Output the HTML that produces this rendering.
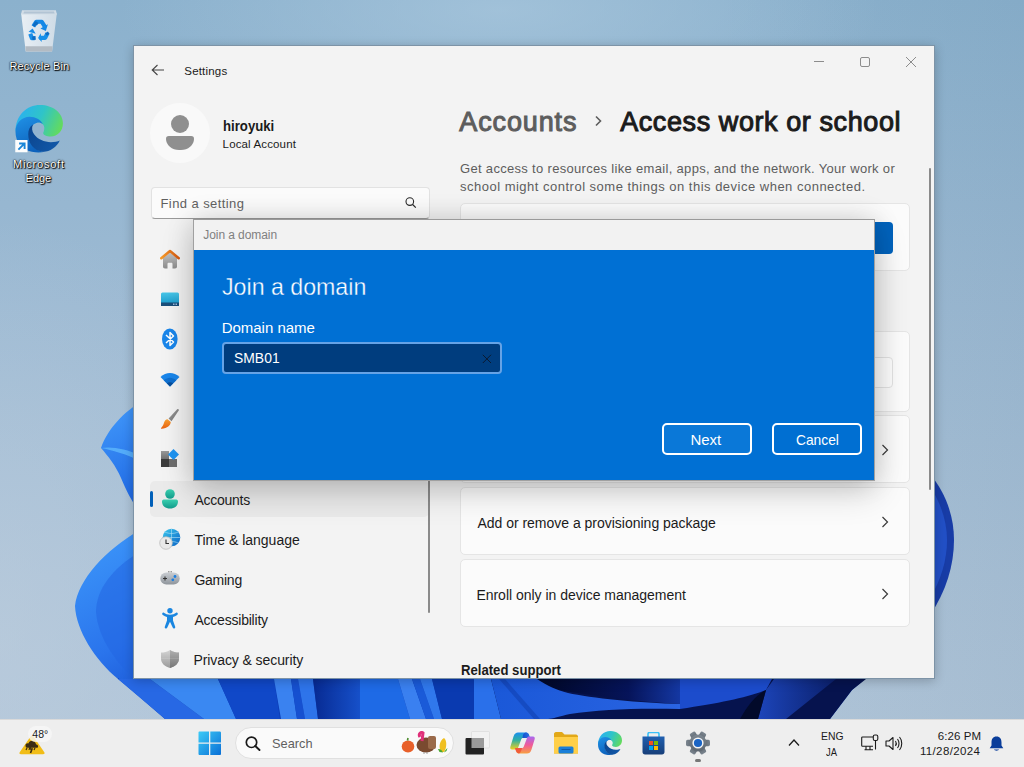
<!DOCTYPE html>
<html><head><meta charset="utf-8">
<style>
*{margin:0;padding:0;box-sizing:border-box}
html,body{width:1024px;height:767px;overflow:hidden}
body{font-family:"Liberation Sans",sans-serif;position:relative;background:radial-gradient(ellipse 300px 420px at 0px 640px,rgba(190,206,222,.55),rgba(190,206,222,0) 100%),radial-gradient(ellipse 380px 120px at 500px 10px,rgba(170,200,222,.7),rgba(170,200,222,0) 100%),linear-gradient(90deg,rgba(0,0,0,0) 70%,rgba(60,100,130,.08) 100%),linear-gradient(180deg,#8bb1cd 0%,#9dbad3 40%,#abc2d7 75%,#b2c6d9 100%)}
.abs{position:absolute}
.t{position:absolute;white-space:nowrap;line-height:normal}
#win{position:absolute;left:133px;top:45px;width:802px;height:634px;background:#f3f3f3;border:1px solid #7d93a6;box-shadow:0 2px 10px rgba(0,0,0,.22)}
.card{position:absolute;left:460px;width:450px;background:#fbfbfb;border:1px solid #e5e5e5;border-radius:5px}
.chev{position:absolute;width:8px;height:12px}
#dlg{position:absolute;left:193px;top:219px;width:682px;height:262px;background:#0070d4;box-shadow:0 0 26px rgba(0,0,0,.14),0 12px 32px rgba(0,0,0,.16);border:1px solid #a0a0a0;border-top-color:#9a9a9a}
#tb{position:absolute;left:0;top:719px;width:1024px;height:48px;background:#eeeeee;border-top:1px solid #dadada}
</style></head>
<body>
<!-- wallpaper bloom -->
<svg class="abs" style="left:0;top:0" width="1024" height="767" viewBox="0 0 1024 767">
  <defs>
    <linearGradient id="bl1" x1="0" y1="0" x2="1" y2="1">
      <stop offset="0" stop-color="#4a9af6"/><stop offset=".5" stop-color="#2f7df0"/><stop offset="1" stop-color="#1f66e2"/>
    </linearGradient>
    <linearGradient id="bl3" x1="0" y1="0" x2="1" y2="0">
      <stop offset="0" stop-color="#3d8ef4"/><stop offset="1" stop-color="#2a76ee"/>
    </linearGradient>
    <linearGradient id="nv" x1="0" y1="0" x2="1" y2="0">
      <stop offset="0" stop-color="#072a92"/><stop offset="1" stop-color="#1a5ad8"/>
    </linearGradient>
    <linearGradient id="dk" x1="0" y1="0" x2="1" y2="0">
      <stop offset="0" stop-color="#0a1e70"/><stop offset="1" stop-color="#020a30"/>
    </linearGradient>
  </defs>
  <!-- left upper petal -->
  <linearGradient id="up1" gradientUnits="userSpaceOnUse" x1="100" y1="420" x2="140" y2="500"><stop offset="0" stop-color="#3e94f8"/><stop offset="1" stop-color="#1f68e4"/></linearGradient>
  <linearGradient id="lp1" gradientUnits="userSpaceOnUse" x1="75" y1="560" x2="150" y2="700"><stop offset="0" stop-color="#3a92f8"/><stop offset=".6" stop-color="#2a74ec"/><stop offset="1" stop-color="#1a56d4"/></linearGradient>
  <path d="M140 403 C126 410 108 428 101 448 C108 456 116 466 121 478 C127 492 132 502 140 512 Z" fill="url(#up1)"/>
  <path d="M101 448 C112 446 126 449 140 455 L140 461 C126 454 112 450 101 448 Z" fill="#5ab4fc" opacity=".85"/>
  <!-- left lower petal -->
  <path d="M140 530 C105 550 78 580 75 606 C76 630 95 660 118 679 L166 719 L190 719 L140 680 Z" fill="url(#lp1)"/>
  <path d="M140 552 C112 568 96 590 96 612 C98 638 116 664 140 684 Z" fill="#2266e2" opacity=".55"/>
  <!-- bottom strip -->
  <path d="M118 679 L865 679 L852 690 L830 719 L165 719 L118 678 Z" fill="#0c3cb4"/>
  <path d="M118 679 L150 679 L204 719 L165 719 Z" fill="#2768e4"/>
  <path d="M150 679 L218 679 L236 719 L204 719 Z" fill="#3a88f2"/>
  <path d="M218 679 L274 679 L280 719 L236 719 Z" fill="#1048c8"/>
  <path d="M274 679 L291 679 L297 719 L281 719 Z" fill="#3a82f0"/>
  <path d="M291 679 L298 679 L305 719 L297 719 Z" fill="#1650d0"/>
  <path d="M298 679 L313 679 L318 719 L305 719 Z" fill="#2e74ea"/>
  <path d="M313 679 L372 679 L372 719 L318 719 Z" fill="url(#nv)"/>
  <path d="M360 679 L398 679 L410 719 L360 719 Z" fill="#1e6ae6"/>
  <path d="M398 679 L412 679 L426 719 L410 719 Z" fill="#3a80f0"/>
  <path d="M412 679 L420 679 L434 719 L426 719 Z" fill="#1a5ad8"/>
  <path d="M420 679 L432 679 L442 719 L434 719 Z" fill="#3078ec"/>
  <path d="M432 679 L474 679 L480 719 L442 719 Z" fill="#0a3ab0"/>
  <linearGradient id="wv" x1="0" y1="0" x2="1" y2="0"><stop offset="0" stop-color="#1a58d8"/><stop offset="1" stop-color="#2a64e2"/></linearGradient>
  <linearGradient id="up" gradientUnits="userSpaceOnUse" x1="540" y1="690" x2="700" y2="679"><stop offset="0" stop-color="#010828"/><stop offset=".55" stop-color="#06145a"/><stop offset="1" stop-color="#1a46c0"/></linearGradient>
  <linearGradient id="rb2" gradientUnits="userSpaceOnUse" x1="760" y1="700" x2="840" y2="700"><stop offset="0" stop-color="#1c44b8"/><stop offset="1" stop-color="#0a1e68"/></linearGradient>
  <path d="M474 679 L866 679 L852 690 L830 719 L474 719 Z" fill="#06134e"/>
  <path d="M474 679 L537 679 L680 679 L680 704 C640 702 600 697 558 690 Z" fill="url(#up)"/>
  <path d="M474 679 L491 679 L501 719 L474 719 Z" fill="#2a70ea"/>
  <path d="M491 679 L537 679 C548 686 556 690 568 693 C590 698 640 703 680 704 L680 709 C640 708 600 709 570 714 C560 716 552 719 548 719 L501 719 Z" fill="url(#wv)"/>
  <path d="M499 679 L505 679 L540 719 L534 719 Z" fill="#1244b8" opacity=".7"/>
  <path d="M680 679 L772 679 L766 690 C745 698 720 703 680 709 Z" fill="#1c4ccc"/>
  <path d="M774 679 L836 679 L786 719 L758 719 L766 690 Z" fill="url(#rb2)"/>
  <path d="M766 690 L758 719 L740 719 C748 705 756 695 766 690 Z" fill="#020a2a"/>
  <!-- right piece -->
  <path d="M930 474 C945 492 954 515 954 540 C954 565 946 592 930 615 Z" fill="#183ca6"/>
  <path d="M930 486 C940 502 947 520 947 540 C947 560 941 580 930 598 Z" fill="#2250c6"/>
</svg>
<!-- recycle bin -->
<svg class="abs" style="left:14px;top:4px" width="50" height="52" viewBox="0 0 738 767">
  <defs><linearGradient id="rb" x1="0" y1="0" x2="1" y2="0"><stop offset="0" stop-color="#e9eff4"/><stop offset=".5" stop-color="#dbe5ee"/><stop offset="1" stop-color="#d0dce6"/></linearGradient></defs>
  <path d="M105 140 L632 140 L562 700 L173 700 Z" fill="url(#rb)"/>
  <path d="M118 92 L618 92 L634 155 L103 155 Z" fill="#d2dde6"/>
  <path d="M150 112 L590 112 L600 140 L138 140 Z" fill="#b2c4d4"/>
  <path d="M168 622 L568 622 L562 702 L173 702 Z" fill="#b3bbc3"/>
  <g stroke-linejoin="round">
    <path d="M285 330 L330 262 L410 262 L455 335" stroke="#1488e6" stroke-width="62" fill="none"/>
    <path d="M500 300 L470 400 L390 360 Z" fill="#1488e6"/>
    <path d="M290 330 L320 275 L350 300" stroke="#0d6cc4" stroke-width="40" fill="none"/>
    <path d="M495 430 L460 500 L375 500" stroke="#1790ea" stroke-width="62" fill="none"/>
    <path d="M395 430 L355 500 L410 560 Z" fill="#1790ea"/>
    <path d="M480 420 L505 455" stroke="#0d6cc4" stroke-width="50" fill="none"/>
    <path d="M305 505 L265 505 L240 440" stroke="#1a8ee8" stroke-width="62" fill="none"/>
    <path d="M215 410 L275 360 L320 440 Z" fill="#1a8ee8"/>
    <path d="M320 500 L270 505" stroke="#0d6cc4" stroke-width="55" fill="none"/>
  </g>
</svg>

<!-- edge desktop icon -->
<svg class="abs" style="left:10px;top:100px" width="60" height="56" viewBox="0 0 822 767"><defs>
    <linearGradient id="eg1" gradientUnits="userSpaceOnUse" x1="100" y1="150" x2="700" y2="420"><stop offset="0" stop-color="#2ab0f2"/><stop offset=".5" stop-color="#2fc4c8"/><stop offset="1" stop-color="#66dc58"/></linearGradient>
    <linearGradient id="eg2" gradientUnits="userSpaceOnUse" x1="100" y1="250" x2="300" y2="700"><stop offset="0" stop-color="#1f8fe4"/><stop offset="1" stop-color="#0d62bc"/></linearGradient>
    <linearGradient id="eg3" gradientUnits="userSpaceOnUse" x1="260" y1="400" x2="650" y2="650"><stop offset="0" stop-color="#0b4690"/><stop offset="1" stop-color="#1258a8"/></linearGradient>
  </defs>
  <path d="M75 420 C80 210 230 70 410 70 C590 70 725 180 725 320 C725 430 650 500 560 500 C500 500 455 478 455 455 C455 440 470 420 470 385 C470 340 430 305 380 305 Z" fill="url(#eg1)"/>
  <path d="M75 430 C75 320 160 230 270 230 C350 230 420 270 450 330 C420 300 370 300 330 330 C270 380 250 450 270 540 C300 650 400 705 480 710 C420 720 360 720 300 710 C160 680 75 570 75 430 Z" fill="url(#eg2)"/>
  <circle cx="392" cy="400" r="72" fill="#92b3cf"/>
  <path d="M250 470 C250 410 270 365 315 335 C295 380 300 430 330 470 C380 540 470 578 560 578 C610 578 655 568 682 555 C640 650 540 712 450 708 C330 700 250 600 250 470 Z" fill="url(#eg3)"/>
  <rect x="72" y="548" width="168" height="168" fill="#fdfdfd"/>
  <path d="M115 680 L200 595 M125 595 L200 595 L200 670" stroke="#1a86d8" stroke-width="26" fill="none"/>
</svg>
<!-- settings window -->
<div id="win"></div>
<svg class="abs" style="left:151px;top:64px" width="14" height="12" viewBox="0 0 14 12"><path d="M6.5 1 L1.2 6 L6.5 11 M1.2 6 L13 6" stroke="#444" stroke-width="1.1" fill="none"/></svg>
<div class="abs" style="left:814px;top:61px;width:10px;height:1px;background:#8c8c8c"></div>
<div class="abs" style="left:860px;top:57px;width:10px;height:10px;border:1px solid #8c8c8c;border-radius:2px"></div>
<svg class="abs" style="left:905px;top:56px" width="12" height="12" viewBox="0 0 12 12"><path d="M1 1 L11 11 M11 1 L1 11" stroke="#8c8c8c" stroke-width="1" fill="none"/></svg>

<!-- avatar -->
<div class="abs" style="left:150px;top:103px;width:60px;height:60px;border-radius:50%;background:#f9f9f9"></div>
<div class="abs" style="left:171px;top:115px;width:18px;height:18px;border-radius:50%;background:#8f8f8f"></div>
<div class="abs" style="left:166px;top:136px;width:28px;height:14px;border-radius:3px 3px 14px 14px / 3px 3px 12px 12px;background:#8f8f8f"></div>

<!-- search -->
<div class="abs" style="left:151px;top:187px;width:279px;height:32px;background:#fbfbfb;border:1px solid #e2e2e2;border-bottom:1px solid #9a9a9a;border-radius:4px"></div>
<svg class="abs" style="left:405px;top:197px" width="12" height="12" viewBox="0 0 12 12"><circle cx="4.8" cy="4.6" r="3.8" stroke="#2a2a2a" stroke-width="1.1" fill="none"/><path d="M7.6 7.5 L10.8 10.6" stroke="#2a2a2a" stroke-width="1.2"/></svg>

<!-- nav selection -->
<div class="abs" style="left:150px;top:481px;width:279px;height:36px;background:#eaeaea;border-radius:5px"></div>
<div class="abs" style="left:150px;top:491px;width:3px;height:16px;background:#005fb8;border-radius:2px"></div>
<!-- nav scrollbar -->
<div class="abs" style="left:428px;top:480px;width:2px;height:133px;background:#8a8a8a;border-radius:1px"></div>

<!-- nav icons -->
<svg class="abs" style="left:160px;top:249px" width="20" height="20" viewBox="0 0 20 20">
  <defs><linearGradient id="hm" x1="0" y1="0" x2="0" y2="1"><stop offset="0" stop-color="#c4c4c4"/><stop offset="1" stop-color="#8c8c8c"/></linearGradient>
  <linearGradient id="rf" x1="0" y1="0" x2="1" y2="0"><stop offset="0" stop-color="#f59a2a"/><stop offset="1" stop-color="#d85a10"/></linearGradient></defs>
  <path d="M3 9 L10 3.5 L17 9 L17 17.5 C17 18.8 16.3 19.5 15 19.5 L12.5 19.5 L12.5 15 C12.5 14.3 12 13.8 11.3 13.8 L8.7 13.8 C8 13.8 7.5 14.3 7.5 15 L7.5 19.5 L5 19.5 C3.7 19.5 3 18.8 3 17.5 Z" fill="url(#hm)"/>
  <path d="M1.3 9.2 L10 2 L18.7 9.2" stroke="url(#rf)" stroke-width="2.6" fill="none" stroke-linecap="round" stroke-linejoin="round"/>
</svg>
<svg class="abs" style="left:160px;top:292px" width="20" height="15" viewBox="0 0 20 15">
  <defs><linearGradient id="sy" x1="0" y1="0" x2="0" y2="1"><stop offset="0" stop-color="#48c6e8"/><stop offset="1" stop-color="#1596c9"/></linearGradient></defs>
  <rect x="1" y="0.5" width="18" height="13.5" rx="1.5" fill="url(#sy)"/>
  <rect x="1" y="10.5" width="18" height="3.5" fill="#1a4f7a"/>
  <rect x="13" y="11.5" width="1.5" height="1.5" fill="#9bd"/><rect x="15.5" y="11.5" width="1.5" height="1.5" fill="#9bd"/>
</svg>
<svg class="abs" style="left:161px;top:328px" width="18" height="22" viewBox="0 0 18 22">
  <ellipse cx="8.8" cy="11" rx="7.8" ry="10.5" fill="#1a86ea"/>
  <path d="M5 7 L12.5 14 L9 17.5 L9 4.5 L12.5 8 L5 15" stroke="#fff" stroke-width="1.5" fill="none" stroke-linejoin="round"/>
</svg>
<svg class="abs" style="left:160px;top:372px" width="20" height="15" viewBox="0 0 20 15">
  <path d="M0.5 5 C6 -0.5 14 -0.5 19.5 5 L10 14.5 Z" fill="#1a86ea"/>
  <path d="M3.7 8.2 C7.5 4.8 12.5 4.8 16.3 8.2 L10 14.5 Z" fill="#0f6fcf"/>
  <path d="M6.8 11.3 C8.6 9.8 11.4 9.8 13.2 11.3 L10 14.5 Z" fill="#0a4f9a"/>
</svg>
<svg class="abs" style="left:160px;top:408px" width="20" height="22" viewBox="0 0 20 22">
  <defs><linearGradient id="br" x1="0" y1="0" x2="1" y2="1"><stop offset="0" stop-color="#a8a8a8"/><stop offset="1" stop-color="#6a6a6a"/></linearGradient>
  <linearGradient id="bt" x1="0" y1="0" x2="0" y2="1"><stop offset="0" stop-color="#f8a030"/><stop offset="1" stop-color="#e86010"/></linearGradient></defs>
  <path d="M17.2 1.2 C18.2 0.5 19.3 1.5 18.7 2.6 L11.5 13.2 L8.6 10.6 Z" fill="url(#br)"/>
  <path d="M7.6 11.3 L10.8 14.1 C10.5 17.5 7.5 20.5 1.5 20.8 C1 20.8 0.8 20.4 1.1 20 C3 18.2 3.5 16.5 4 14.8 C4.5 12.8 5.8 11.5 7.6 11.3 Z" fill="url(#bt)"/>
</svg>
<svg class="abs" style="left:161px;top:448px" width="19" height="20" viewBox="0 0 19 20">
  <defs><linearGradient id="ap" x1="0" y1="0" x2="0" y2="1"><stop offset="0" stop-color="#9a9a9a"/><stop offset="1" stop-color="#707070"/></linearGradient></defs>
  <rect x="0" y="3" width="8" height="8" fill="url(#ap)"/>
  <rect x="0" y="11" width="8" height="8" fill="#3c3c3c"/>
  <rect x="8" y="11" width="8" height="8" fill="#6e6e6e"/>
  <path d="M12.5 1 L18 6.5 L12.5 12 L7 6.5 Z" fill="#1e94f2"/>
</svg>
<svg class="abs" style="left:161px;top:489px" width="18" height="20" viewBox="0 0 18 20">
  <defs><linearGradient id="ac" x1="0" y1="0" x2="0" y2="1"><stop offset="0" stop-color="#3ad0b0"/><stop offset="1" stop-color="#119a8a"/></linearGradient></defs>
  <circle cx="9" cy="5" r="4.8" fill="url(#ac)"/>
  <path d="M1 12.5 C1 11 2 10.5 3.5 10.5 L14.5 10.5 C16 10.5 17 11 17 12.5 C17 17 13.5 19.5 9 19.5 C4.5 19.5 1 17 1 12.5 Z" fill="url(#ac)"/>
</svg>
<svg class="abs" style="left:159px;top:528px" width="22" height="22" viewBox="0 0 22 22">
  <defs><linearGradient id="gl" x1="0" y1="0" x2="1" y2="1"><stop offset="0" stop-color="#3ac8ee"/><stop offset="1" stop-color="#0b62c4"/></linearGradient></defs>
  <circle cx="12.5" cy="9.5" r="8.8" fill="url(#gl)"/>
  <path d="M12.5 0.7 L12.5 18.3 M3.7 9.5 L21.3 9.5 M6 4 C10 6 15 6 19 4 M6 15 C10 13 15 13 19 15" stroke="#bfe8f8" stroke-width=".7" fill="none" opacity=".8"/>
  <circle cx="7" cy="15" r="6.3" fill="#e9e9e9" stroke="#b8b8b8" stroke-width=".7"/>
  <path d="M7 11.5 L7 15.5 L10 15.5" stroke="#333" stroke-width="1.1" fill="none"/>
</svg>
<svg class="abs" style="left:160px;top:571px" width="20" height="14" viewBox="0 0 20 14">
  <defs><linearGradient id="gm" x1="0" y1="0" x2="0" y2="1"><stop offset="0" stop-color="#c9cdd2"/><stop offset="1" stop-color="#8f959c"/></linearGradient></defs>
  <rect x="0.3" y="1.5" width="19.4" height="12" rx="6" fill="url(#gm)"/>
  <path d="M3 7.5 L7 7.5 M5 5.5 L5 9.5" stroke="#333" stroke-width="1.1"/>
  <circle cx="15" cy="5.5" r="1.4" fill="#1c7fe0"/><circle cx="12.8" cy="8.8" r="1.4" fill="#1c7fe0"/>
  <circle cx="8.5" cy="0.8" r=".5" fill="#555"/><circle cx="10" cy="0.8" r=".5" fill="#555"/><circle cx="11.5" cy="0.8" r=".5" fill="#555"/>
</svg>
<svg class="abs" style="left:161px;top:608px" width="18" height="21" viewBox="0 0 18 21">
  <circle cx="9" cy="2.8" r="2.7" fill="#1a86e0"/>
  <path d="M1.3 5.3 C1.6 4.6 2.3 4.4 2.9 4.8 C4.5 6 6.5 6.8 9 6.8 C11.5 6.8 13.5 6 15.1 4.8 C15.7 4.4 16.4 4.6 16.7 5.3 C17 5.9 16.8 6.5 16.2 6.9 C14.8 7.9 13.3 8.6 12 8.9 L12 12.5 L14.2 18.8 C14.5 19.6 14.1 20.3 13.3 20.5 C12.6 20.7 11.9 20.3 11.7 19.6 L9 13.8 L6.3 19.6 C6.1 20.3 5.4 20.7 4.7 20.5 C3.9 20.3 3.5 19.6 3.8 18.8 L6 12.5 L6 8.9 C4.7 8.6 3.2 7.9 1.8 6.9 C1.2 6.5 1 5.9 1.3 5.3 Z" fill="#1a86e0"/>
</svg>
<svg class="abs" style="left:160px;top:649px" width="20" height="20" viewBox="0 0 20 20">
  <defs><linearGradient id="sh" x1="0" y1="0" x2="0" y2="1"><stop offset="0" stop-color="#d4d4d4"/><stop offset="1" stop-color="#9a9a9a"/></linearGradient>
  <linearGradient id="sh2" x1="0" y1="0" x2="0" y2="1"><stop offset="0" stop-color="#b0b0b0"/><stop offset="1" stop-color="#767676"/></linearGradient></defs>
  <path d="M10 1 C13 3 16 3.5 19 3.5 L19 9.5 C19 14 15.5 17.5 10 19 C4.5 17.5 1 14 1 9.5 L1 3.5 C4 3.5 7 3 10 1 Z" fill="url(#sh)"/>
  <path d="M10 1 L10 19 C15.5 17.5 19 14 19 9.5 L19 3.5 C16 3.5 13 3 10 1 Z" fill="url(#sh2)"/>
  <path d="M1 9.5 L19 9.5" stroke="#fff" stroke-width=".4" opacity=".3"/>
</svg>

<svg class="abs" style="left:594px;top:115px" width="9" height="12" viewBox="0 0 9 12"><path d="M2 1.5 L6.5 6 L2 10.5" stroke="#5d5d5d" stroke-width="1.6" fill="none"/></svg>
<!-- content cards -->
<div class="card" style="top:203px;height:68px"></div>
<div class="abs" style="left:840px;top:222px;width:53px;height:32px;background:#0063bd;border-radius:4px"></div>
<div class="card" style="top:331px;height:81px"></div>
<div class="abs" style="left:800px;top:357px;width:93px;height:31px;background:#fdfdfd;border:1px solid #e3e3e3;border-radius:4px"></div>
<div class="card" style="top:415px;height:68px"></div>
<div class="card" style="top:487px;height:68px"></div>
<div class="card" style="top:559px;height:68px"></div>
<svg class="chev" style="left:881px;top:444px" viewBox="0 0 8 12"><path d="M1.5 1 L6.5 6 L1.5 11" stroke="#3a3a3a" stroke-width="1.2" fill="none"/></svg>
<svg class="chev" style="left:881px;top:516px" viewBox="0 0 8 12"><path d="M1.5 1 L6.5 6 L1.5 11" stroke="#3a3a3a" stroke-width="1.2" fill="none"/></svg>
<svg class="chev" style="left:881px;top:588px" viewBox="0 0 8 12"><path d="M1.5 1 L6.5 6 L1.5 11" stroke="#3a3a3a" stroke-width="1.2" fill="none"/></svg>
<!-- content scrollbar -->
<div class="abs" style="left:929px;top:168px;width:2px;height:322px;background:#8a8a8a;border-radius:1px"></div>

<!-- dialog -->
<div id="dlg">
  <div class="abs" style="left:0;top:0;width:680px;height:30px;background:#f2f2f2"></div>
</div>
<div class="abs" style="left:222px;top:342px;width:280px;height:32px;background:#003d7e;border:2px solid #66a3e6;border-radius:4px"></div>
<svg class="abs" style="left:482px;top:354px" width="10" height="10" viewBox="0 0 10 10"><path d="M0.8 0.8 L9 9 M9 0.8 L0.8 9" stroke="#0a1a30" stroke-width="1"/></svg>
<div class="abs" style="left:662px;top:423px;width:90px;height:32px;border:2px solid #fff;border-radius:5px;background:#0a78d8"></div>
<div class="abs" style="left:772px;top:423px;width:90px;height:32px;border:2px solid #fff;border-radius:5px;background:#006fd2"></div>

<!-- taskbar -->
<div id="tb"></div>
<!-- weather -->

<svg class="abs" style="left:19px;top:735px" width="27" height="20" viewBox="0 0 27 20">
  <path d="M13 0.5 C13.5 0.5 14 0.8 14.3 1.3 L25.3 17.3 C26 18.5 25.4 19.3 24 19.3 L2 19.3 C0.6 19.3 0 18.5 0.7 17.3 L11.7 1.3 C12 0.8 12.5 0.5 13 0.5 Z" fill="#f0b90b" opacity=".95"/>
  <path d="M6.5 10.5 C6.5 9 8 8 9.5 8.5 C10 6.5 12 5.5 14 6 C16 6.5 17 8 17 9.5 C19 9.5 19.8 11.5 18.5 12.8 L7.8 12.8 C7 12.5 6.5 11.5 6.5 10.5 Z" fill="#3a2c14"/>
  <path d="M12.5 9.5 L10.5 14 L13 14 L11.5 18" stroke="#3a2c14" stroke-width="1.6" fill="none"/>
  <path d="M8 13 L7 15 M16 13 L15 15" stroke="#3a2c14" stroke-width="1.2"/>
</svg>
<div class="abs" style="left:28px;top:726px;width:24px;height:16px;border-radius:8px;background:rgba(247,247,247,.82)"></div>
<!-- start -->
<svg class="abs" style="left:198px;top:731px" width="24" height="25" viewBox="0 0 24 25">
  <defs><linearGradient id="st" x1="0" y1="0" x2="1" y2="1"><stop offset="0" stop-color="#3ccbf7"/><stop offset="1" stop-color="#0a6fd6"/></linearGradient></defs>
  <path d="M0.5 1.5 C0.5 0.8 1 0.5 1.5 0.5 L11 0.5 L11 11.5 L0.5 11.5 Z M12.3 0.5 L21.5 0.5 C22.3 0.5 23 1 23 1.8 L23 11.5 L12.3 11.5 Z M0.5 12.8 L11 12.8 L11 24 L1.5 24 C1 24 0.5 23.5 0.5 23 Z M12.3 12.8 L23 12.8 L23 23 C23 23.5 22.5 24 22 24 L12.3 24 Z" fill="url(#st)"/>
</svg>
<!-- search pill -->
<div class="abs" style="left:235px;top:727px;width:219px;height:32px;border-radius:16px;background:#fafafa;border:1px solid #e0e0e0"></div>
<svg class="abs" style="left:245px;top:736px" width="16" height="15" viewBox="0 0 16 15"><circle cx="6.5" cy="6.3" r="5.2" stroke="#1a1a1a" stroke-width="1.7" fill="none"/><path d="M10.3 10 L14.5 14" stroke="#1a1a1a" stroke-width="1.9" stroke-linecap="round"/></svg>
<!-- emoji -->
<svg class="abs" style="left:400px;top:731px" width="50" height="24" viewBox="0 0 50 24">
  <ellipse cx="8" cy="15.5" rx="6.3" ry="6" fill="#e8602a"/>
  <path d="M7.5 9.5 L8 7" stroke="#4a8a2a" stroke-width="1.6"/>
  <ellipse cx="26" cy="14" rx="9.5" ry="7.5" fill="#7a4a30"/>
  <rect x="28" y="5" width="8" height="13" rx="2" fill="#9a6a4a"/>
  <path d="M20 6 C18 3 21 0.5 23 2 L22 10" stroke="#e0307a" stroke-width="3" fill="none"/>
  <path d="M24 21 L24 23 M27 21 L27 23" stroke="#888" stroke-width=".8"/>
  <path d="M42 21 C38 18 39 10 44 7 C47 9 47 17 44 21 Z" fill="#f0c020"/>
  <path d="M38 18 C40 17.5 42 19 43 21.5 L39.5 21 Z M47.5 17 C46 18 45 20 44 21.5 L46.5 20 Z" fill="#4aa830"/>
</svg>
<!-- task view -->
<svg class="abs" style="left:465px;top:731px" width="25" height="24" viewBox="0 0 25 24">
  <rect x="6.5" y="0.5" width="18" height="16.5" rx="1" fill="#f2f2f2" stroke="#d6d6d6" stroke-width=".6"/>
  <rect x="0.5" y="7" width="18.5" height="16.5" rx="1" fill="#222"/>
  <rect x="6.5" y="7" width="12.5" height="10" fill="#9a9a9a"/>
</svg>
<!-- copilot -->
<svg class="abs" style="left:510px;top:732px" width="25" height="22" viewBox="0 0 25 22">
  <defs>
    <linearGradient id="cp1" x1="0" y1="0" x2="0" y2="1"><stop offset="0" stop-color="#1a8ef0"/><stop offset=".45" stop-color="#30b0a0"/><stop offset="1" stop-color="#f0d020"/></linearGradient>
    <linearGradient id="cp2" x1="0" y1="0" x2="0" y2="1"><stop offset="0" stop-color="#a868f0"/><stop offset=".5" stop-color="#f05a98"/><stop offset="1" stop-color="#f8a040"/></linearGradient>
    <linearGradient id="cp3" x1="0" y1="0" x2="1" y2="0"><stop offset="0" stop-color="#1050d0"/><stop offset="1" stop-color="#3070e0"/></linearGradient>
  </defs>
  <path d="M8 0.5 L16 0.5 C17.5 0.5 18.5 1.5 19 3 L20 6 L13 6 C12 6 11.5 6.5 11 8 L8 16 C7.5 17 7 17.5 6 17.5 L2 17.5 C0.5 17.5 0 16.5 0.3 15 L3.5 4.5 C4.5 1.5 6 0.5 8 0.5 Z" fill="url(#cp1)"/>
  <path d="M13 3 C13.5 1.5 14.5 0.5 16 0.5 C17.5 0.5 18.5 1.5 19 3 L20 6 L12.5 6 Z" fill="url(#cp3)"/>
  <path d="M17 21.5 L9 21.5 C7.5 21.5 6.5 20.5 6 19 L5 16 L12 16 C13 16 13.5 15.5 14 14 L17 6 C17.5 5 18 4.5 19 4.5 L23 4.5 C24.5 4.5 25 5.5 24.7 7 L21.5 17.5 C20.5 20.5 19 21.5 17 21.5 Z" fill="url(#cp2)"/>
  <path d="M5 16 L12 16 C11.5 18 11 19.5 10 21 C9 21.5 8 21.5 7.5 21 C6.5 20.5 6 19 5 16 Z" fill="#f05030" opacity=".8"/>
</svg>
<!-- explorer -->
<svg class="abs" style="left:554px;top:732px" width="24" height="22" viewBox="0 0 24 22">
  <path d="M0 2 C0 1 0.7 0 2 0 L8 0 L10.5 2.5 L22 2.5 C23 2.5 24 3.5 24 4.5 L24 21.5 L0 21.5 Z" fill="#e2a818"/>
  <path d="M0 5 L24 5 L24 21.5 L0 21.5 Z" fill="#ffcf48"/>
  <rect x="4.5" y="14.5" width="15" height="7" rx="1.5" fill="#1a7fd8"/>
  <rect x="7.5" y="17" width="9" height="1" fill="#0f5aa8"/>
</svg>
<!-- edge taskbar -->
<svg class="abs" style="left:598px;top:731px" width="24" height="24" viewBox="75 70 650 645">
  <path d="M75 420 C80 210 230 70 410 70 C590 70 725 180 725 320 C725 430 650 500 560 500 C500 500 455 478 455 455 C455 440 470 420 470 385 C470 340 430 305 380 305 Z" fill="url(#eg1)"/>
  <path d="M75 430 C75 320 160 230 270 230 C350 230 420 270 450 330 C420 300 370 300 330 330 C270 380 250 450 270 540 C300 650 400 705 480 710 C420 720 360 720 300 710 C160 680 75 570 75 430 Z" fill="url(#eg2)"/>
  <circle cx="392" cy="400" r="72" fill="#eeeeee"/>
  <path d="M250 470 C250 410 270 365 315 335 C295 380 300 430 330 470 C380 540 470 578 560 578 C610 578 655 568 682 555 C640 650 540 712 450 708 C330 700 250 600 250 470 Z" fill="url(#eg3)"/>
</svg>
<!-- store -->
<svg class="abs" style="left:642px;top:732px" width="23" height="23" viewBox="0 0 23 23">
  <defs><linearGradient id="so" x1="0" y1="0" x2="0" y2="1"><stop offset="0" stop-color="#1f5fb0"/><stop offset="1" stop-color="#173e78"/></linearGradient></defs>
  <path d="M6 5 L6 2 C6 1 6.5 0.5 7.5 0.5 L15.5 0.5 C16.5 0.5 17 1 17 2 L17 5" stroke="#3ac0f8" stroke-width="1.6" fill="none"/>
  <path d="M0.5 4.5 L22.5 4.5 L22.5 20 C22.5 21.5 21.5 22.5 20 22.5 L3 22.5 C1.5 22.5 0.5 21.5 0.5 20 Z" fill="url(#so)"/>
  <rect x="7" y="9" width="4" height="4" fill="#f25022"/><rect x="12" y="9" width="4" height="4" fill="#7fba00"/>
  <rect x="7" y="14" width="4" height="4" fill="#00a4ef"/><rect x="12" y="14" width="4" height="4" fill="#ffb900"/>
</svg>
<!-- settings gear -->
<svg class="abs" style="left:686px;top:731px" width="24" height="24" viewBox="-12 -12 24 24">
  <defs><linearGradient id="gr" x1="0" y1="0" x2="0" y2="1"><stop offset="0" stop-color="#7c8690"/><stop offset="1" stop-color="#5e6770"/></linearGradient></defs>
  <g fill="url(#gr)"><rect x="-3.2" y="-12" width="6.4" height="6" rx="1.6" transform="rotate(30)"/><rect x="-3.2" y="-12" width="6.4" height="6" rx="1.6" transform="rotate(90)"/><rect x="-3.2" y="-12" width="6.4" height="6" rx="1.6" transform="rotate(150)"/><rect x="-3.2" y="-12" width="6.4" height="6" rx="1.6" transform="rotate(210)"/><rect x="-3.2" y="-12" width="6.4" height="6" rx="1.6" transform="rotate(270)"/><rect x="-3.2" y="-12" width="6.4" height="6" rx="1.6" transform="rotate(330)"/><circle r="8.6"/></g>
  <circle r="5.6" fill="#f4f4f4"/>
  <circle r="4.1" fill="#1a64c4"/>
</svg>
<div class="abs" style="left:695px;top:759px;width:6px;height:3px;border-radius:2px;background:#777"></div>
<!-- tray -->
<svg class="abs" style="left:788px;top:738px" width="12" height="9" viewBox="0 0 12 9"><path d="M1 7.5 L6 2 L11 7.5" stroke="#1a1a1a" stroke-width="1.3" fill="none"/></svg>
<svg class="abs" style="left:861px;top:734px" width="18" height="17" viewBox="0 0 18 17">
  <path d="M12 3 L1.5 3 C1 3 0.7 3.3 0.7 3.8 L0.7 11.5 C0.7 12 1 12.3 1.5 12.3 L12 12.3" stroke="#1a1a1a" stroke-width="1.1" fill="none"/>
  <path d="M5 12.3 L5 15.3 M9 12.3 L9 15.3 M3.5 15.7 L12 15.7" stroke="#1a1a1a" stroke-width="1.1"/>
  <rect x="12.3" y="1" width="4.5" height="5.5" rx="1.5" stroke="#1a1a1a" stroke-width="1.1" fill="none"/>
  <path d="M14.5 6.5 L14.5 15.5" stroke="#1a1a1a" stroke-width="1.1"/>
</svg>
<svg class="abs" style="left:885px;top:736px" width="18" height="15" viewBox="0 0 18 15">
  <path d="M1 5 L4 5 L8 1.5 L8 13.5 L4 10 L1 10 Z" stroke="#1a1a1a" stroke-width="1.1" fill="none" stroke-linejoin="round"/>
  <path d="M10.5 5 C11.5 6.5 11.5 8.5 10.5 10 M12.5 3 C14.5 5.5 14.5 9.5 12.5 12 M14.5 1 C17.5 4.5 17.5 10.5 14.5 14" stroke="#1a1a1a" stroke-width="1.1" fill="none"/>
</svg>
<svg class="abs" style="left:989px;top:736px" width="15" height="16" viewBox="0 0 15 16">
  <path d="M7.5 0.5 C11 0.5 12.5 3 12.5 6.5 L12.5 9.5 L14.3 12.3 L0.7 12.3 L2.5 9.5 L2.5 6.5 C2.5 3 4 0.5 7.5 0.5 Z" fill="#0a3d9a"/>
  <path d="M5 13.5 C5.5 15 9.5 15 10 13.5 Z" fill="#0a3d9a"/>
</svg>

<div class="t" style="left:9.50px;top:59.70px;font-size:11px;font-weight:normal;color:#ffffff;letter-spacing:0.154px;text-shadow:0 0 1px #000,0 0 2px #000,1px 1px 1px #000">Recycle Bin</div>
<div class="t" style="left:13.10px;top:157.80px;font-size:11px;font-weight:normal;color:#ffffff;letter-spacing:0.780px;text-shadow:0 0 1px #000,0 0 2px #000,1px 1px 1px #000">Microsoft</div>
<div class="t" style="left:25.60px;top:171.80px;font-size:11px;font-weight:normal;color:#ffffff;letter-spacing:-0.024px;text-shadow:0 0 1px #000,0 0 2px #000,1px 1px 1px #000">Edge</div>
<div class="t" style="left:184.30px;top:65.20px;font-size:11.5px;font-weight:normal;color:#1a1a1a;letter-spacing:0.185px;">Settings</div>
<div class="t" style="left:222.60px;top:117.90px;font-size:14px;font-weight:bold;color:#1a1a1a;transform:scaleX(0.9409);transform-origin:0 0;">hiroyuki</div>
<div class="t" style="left:222.60px;top:137.80px;font-size:11.5px;font-weight:normal;color:#1a1a1a;letter-spacing:0.138px;">Local Account</div>
<div class="t" style="left:160.50px;top:195.80px;font-size:13px;font-weight:normal;color:#5f5f5f;letter-spacing:0.414px;">Find a setting</div>
<div class="t" style="left:194.40px;top:492.20px;font-size:14px;font-weight:normal;color:#1b1b1b;letter-spacing:-0.255px;">Accounts</div>
<div class="t" style="left:194.40px;top:532.20px;font-size:14px;font-weight:normal;color:#1b1b1b;letter-spacing:0.005px;">Time &amp; language</div>
<div class="t" style="left:194.40px;top:572.00px;font-size:14px;font-weight:normal;color:#1b1b1b;letter-spacing:-0.247px;">Gaming</div>
<div class="t" style="left:194.40px;top:612.00px;font-size:14px;font-weight:normal;color:#1b1b1b;letter-spacing:-0.212px;">Accessibility</div>
<div class="t" style="left:193.40px;top:652.10px;font-size:14px;font-weight:normal;color:#1b1b1b;letter-spacing:-0.079px;">Privacy &amp; security</div>
<div class="t" style="left:459.30px;top:107.10px;font-size:27px;font-weight:normal;color:#5d5d5d;letter-spacing:0.877px;-webkit-text-stroke:1px #5d5d5d">Accounts</div>
<div class="t" style="left:620.20px;top:107.20px;font-size:27px;font-weight:normal;color:#1b1b1b;letter-spacing:0.585px;-webkit-text-stroke:1px #1b1b1b">Access work or school</div>
<div class="t" style="left:460.00px;top:160.60px;font-size:13px;font-weight:normal;color:#5d5d5d;letter-spacing:0.316px;">Get access to resources like email, apps, and the network. Your work or</div>
<div class="t" style="left:460.00px;top:178.60px;font-size:13px;font-weight:normal;color:#5d5d5d;letter-spacing:0.495px;">school might control some things on this device when connected.</div>
<div class="t" style="left:477.40px;top:514.90px;font-size:14px;font-weight:normal;color:#1b1b1b;letter-spacing:-0.012px;">Add or remove a provisioning package</div>
<div class="t" style="left:476.40px;top:586.80px;font-size:14px;font-weight:normal;color:#1b1b1b;letter-spacing:-0.020px;">Enroll only in device management</div>
<div class="t" style="left:460.70px;top:661.80px;font-size:14px;font-weight:bold;color:#1b1b1b;transform:scaleX(0.9382);transform-origin:0 0;">Related support</div>
<div class="t" style="left:203.30px;top:227.70px;font-size:12px;font-weight:normal;color:#808080;letter-spacing:-0.078px;">Join a domain</div>
<div class="t" style="left:222.30px;top:273.20px;font-size:24px;font-weight:normal;color:#ffffff;transform:scaleX(0.9657);transform-origin:0 0;-webkit-text-stroke:0.35px #0070d4">Join a domain</div>
<div class="t" style="left:221.70px;top:318.90px;font-size:15px;font-weight:normal;color:#ffffff;letter-spacing:-0.023px;">Domain name</div>
<div class="t" style="left:234.10px;top:348.90px;font-size:15px;font-weight:normal;color:#ffffff;transform:scaleX(0.9274);transform-origin:0 0;">SMB01</div>
<div class="t" style="left:690.60px;top:430.80px;font-size:15px;font-weight:normal;color:#ffffff;letter-spacing:-0.125px;">Next</div>
<div class="t" style="left:795.60px;top:430.80px;font-size:15px;font-weight:normal;color:#ffffff;transform:scaleX(0.9189);transform-origin:0 0;">Cancel</div>
<div class="t" style="left:271.60px;top:736.10px;font-size:13.5px;font-weight:normal;color:#5f5f5f;transform:scaleX(0.9464);transform-origin:0 0;">Search</div>
<div class="t" style="left:820.80px;top:730.20px;font-size:11.5px;font-weight:normal;color:#1a1a1a;transform:scaleX(0.9009);transform-origin:0 0;">ENG</div>
<div class="t" style="left:826.30px;top:746.30px;font-size:11.5px;font-weight:normal;color:#1a1a1a;transform:scaleX(0.8218);transform-origin:0 0;">JA</div>
<div class="t" style="left:937.80px;top:729.50px;font-size:11.5px;font-weight:normal;color:#1a1a1a;letter-spacing:0.075px;">6:26 PM</div>
<div class="t" style="left:919.90px;top:745.30px;font-size:11.5px;font-weight:normal;color:#1a1a1a;letter-spacing:0.366px;">11/28/2024</div>
<div class="t" style="left:32.30px;top:727.80px;font-size:10.5px;font-weight:normal;color:#1a1a1a;letter-spacing:0.060px;">48°</div>
</body></html>
